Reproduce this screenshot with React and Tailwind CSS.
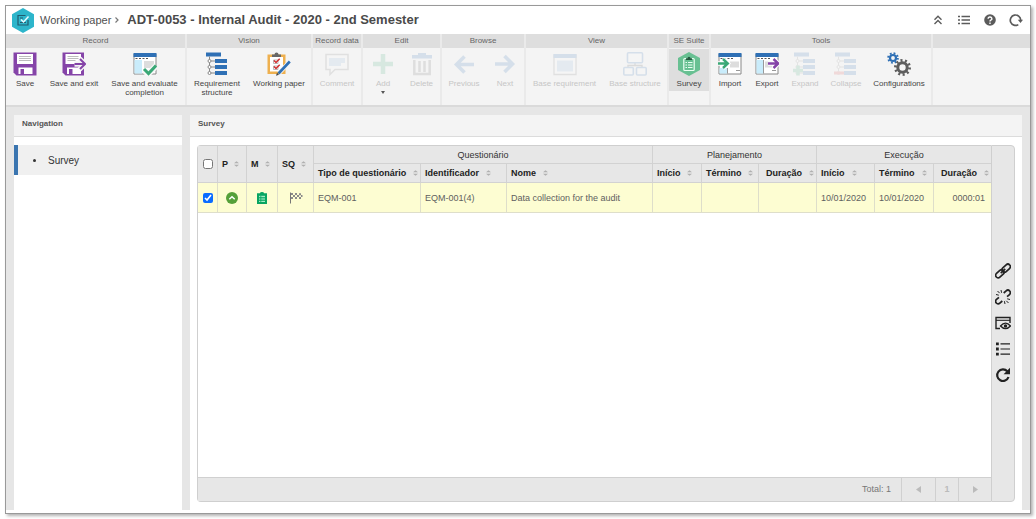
import React, { useState } from "react";

const PURPLE = "#8544a8";
const BLUE = "#2f70b5";
const GREEN = "#3aa876";
const DARK = "#5d5d5d";

/* ---------- ribbon icons ---------- */

function Ico({ children }) {
  return (
    <svg viewBox="0 0 24 24" className="h-6 w-6 shrink-0" fill="none" aria-hidden="true">
      {children}
    </svg>
  );
}

function SaveIcon() {
  return (
    <Ico>
      <path fill={PURPLE} d="M0.5 0.5h23v23H3.500l-3-3z" />
      <path fill="#fff" d="M4 2h16v10H4zM5.500 15.500h14V22h-14z" />
      <path stroke="#bdbdbd" d="M6 4.500h12M6 6.500h12M6 8.500h12" />
      <path fill={PURPLE} d="M7.500 17h3.500v5H7.500z" />
      <path stroke={PURPLE} d="M2 2v18.500l1.800 1.800" />
    </Ico>
  );
}

function SaveExitIcon() {
  return (
    <Ico>
      <path fill={PURPLE} d="M0.5 0.5H22v23H3.500l-3-3z" />
      <path fill="#fff" d="M3.500 2h15.500v10H3.500zM5 15.500h14V22H5z" />
      <path stroke="#bdbdbd" d="M5.500 4.500h11M5.500 6.500h11M5.500 8.500h8" />
      <path fill={PURPLE} d="M7 17h3.500v5H7z" />
      <path stroke="#f4f4f4" strokeWidth="5.500" d="M12.500 12H24" />
      <path stroke="#f4f4f4" strokeWidth="5" d="m17.500 6.500 5.500 5.500-5.500 5.500" />
      <path stroke={PURPLE} strokeWidth="2" d="M12.500 12H23M18 7l5 5-5 5" />
    </Ico>
  );
}

function WindowBase() {
  return (
    <>
      <path fill="#fff" stroke="#888" d="M1 2h22v20H1z" />
      <path fill={BLUE} d="M0.500 1h23v4H0.500z" />
      <path stroke="#555" strokeDasharray="2 1.500" d="M2.500 6.500h14" />
    </>
  );
}

function EvaluateIcon() {
  return (
    <Ico>
      <WindowBase />
      <path fill="#c9ecfb" d="M1.500 8H9v13.500H1.500z" />
      <path fill="#ddd" d="M11 9h10v7H11z" />
      <path stroke="#f8f8f8" strokeWidth="6" d="m11 18 4 4 8-8" />
      <path stroke={GREEN} strokeWidth="3" d="m11 17 4.500 4.500L23 13.500" />
    </Ico>
  );
}

function ImportIcon() {
  return (
    <Ico>
      <WindowBase />
      <path fill="#c9ecfb" d="M1.500 16H9v5.500H1.500z" />
      <path fill="#ddd" d="M12 9.500h9v6h-9z" />
      <path stroke="#999" d="M9.500 16v5.500M18 18.500h4" />
      <path stroke="#fff" strokeWidth="4.500" d="M0 11.500h9.500M5 7l4.800 4.500L5 16" />
      <path stroke={GREEN} strokeWidth="2.400" d="M0 11.500h9.500M5 7l4.800 4.500L5 16" />
    </Ico>
  );
}

function ExportIcon() {
  return (
    <Ico>
      <WindowBase />
      <path fill="#c9ecfb" d="M1.500 8H8v13.500H1.500z" />
      <path fill="#ddd" d="M10 9.500h7v6h-7z" />
      <path stroke="#999" d="M8.500 8v13.500M17 18.500h4" />
      <path stroke="#fff" strokeWidth="4.500" d="M13 11.500h10M18.500 7l4.800 4.500-4.800 4.500" />
      <path stroke={PURPLE} strokeWidth="2.400" d="M13 11.500h10M18.500 7l4.800 4.500-4.800 4.500" />
    </Ico>
  );
}

function Tree() {
  return (
    <>
      <path fill={BLUE} d="M1 0.500h15v4H1zM10 7h12v4H10zM10 13h12v4H10zM10 19h12v4H10z" />
      <path stroke="#888" d="M4.500 4.500V21M6 9h4M6 15h4M6 21h4" />
      <path fill="#fff" stroke="#888" d="M3 9a1.500 1.500 0 1 0 3 0a1.500 1.500 0 1 0-3 0M3 15a1.500 1.500 0 1 0 3 0a1.500 1.500 0 1 0-3 0M3 21a1.500 1.500 0 1 0 3 0a1.500 1.500 0 1 0-3 0" />
    </>
  );
}

function TreeIcon() {
  return <Ico><Tree /></Ico>;
}

function ExpandIcon() {
  return (
    <Ico>
      <Tree />
      <path stroke={GREEN} strokeWidth="3.500" d="M0 18.500h10M5 13.500v10" />
    </Ico>
  );
}

function CollapseIcon() {
  return (
    <Ico>
      <Tree />
      <path stroke="#e04848" strokeWidth="3" d="M0 21h10" />
    </Ico>
  );
}

function ClipboardIcon() {
  return (
    <Ico>
      <path fill="#eeb04f" d="M0.500 2.500h18v19.500h-18z" />
      <path fill="#fff" d="M3 5h13v14.500H3z" />
      <path fill="#666" d="M5 2.500h2.500a2 2 0 0 1 4 0H14V5H5z" />
      <path stroke="#aaa" strokeWidth="0.800" d="M6.500 8h4.500v3.500H6.500zM6.500 14h4.500v3.500H6.500z" />
      <path stroke="#d22d2d" strokeWidth="1.500" d="m7 8.500 2 2 3.700-3.700M7 14.500l2 2 3.700-3.700" />
      <path stroke="#f4f4f4" strokeWidth="4.500" d="M12 21 23 9.500" />
      <path stroke={BLUE} strokeWidth="2.600" d="M11.500 21.500 22.800 9.500" />
      <path fill="#444" d="m9 23.800 1-3 2 2z" />
    </Ico>
  );
}

function CommentIcon() {
  return (
    <Ico>
      <path fill="#fff" stroke="#777" strokeWidth="1.500" d="M1 2.500h22v15H10l-5 5v-5H1z" />
      <path fill="#8fb4dc" d="M4 6h16v5h-4v3H4z" />
    </Ico>
  );
}

function PlusIcon() {
  return <Ico><path stroke={GREEN} strokeWidth="4.500" d="M2 12h20M12 2v20" /></Ico>;
}

function TrashIcon() {
  return (
    <Ico>
      <path fill={BLUE} d="M2 3h6V1h8v2h6v3.500H2z" />
      <path stroke="#666" strokeWidth="2.500" d="M4.300 8v14h15.400V8M9.500 9v11M14.500 9v11" />
    </Ico>
  );
}

function ArrowLeftIcon() {
  return <Ico><path stroke={BLUE} strokeWidth="3.600" d="M22 12.500H5M12.500 4.500l-8 8 8 8" /></Ico>;
}

function ArrowRightIcon() {
  return <Ico><path stroke={BLUE} strokeWidth="3.600" d="M2 12h17M11.500 4l8 8-8 8" /></Ico>;
}

function BaseRequirementIcon() {
  return (
    <Ico>
      <path fill="#fff" stroke="#777" strokeWidth="1.300" d="M1 3h22v19.500H1z" />
      <path fill={BLUE} d="M0.500 2h23v4H0.500z" />
      <path fill="#8fb4dc" d="M4 8.500h16v11H4z" />
    </Ico>
  );
}

function BaseStructureIcon() {
  return (
    <Ico>
      <path stroke="#555" strokeWidth="1.400" d="M12 10v4M5 16v-2.500h14V16" />
      <g fill="#fff" stroke={BLUE} strokeWidth="1.600">
        <rect x="4.500" y="0.800" width="15" height="10" rx="1" />
        <rect x="0.800" y="15.500" width="9.500" height="7.500" rx="1" />
        <rect x="13.500" y="15.500" width="9.700" height="7.500" rx="1" />
      </g>
    </Ico>
  );
}

function SurveyIcon() {
  return (
    <Ico>
      <path fill="#68c092" d="m12 0 11 6v12l-11 6-11-6V6z" />
      <rect x="6.800" y="6.500" width="10.400" height="12" rx="1" stroke="#eafff2" strokeWidth="1.200" />
      <path fill="#24583e" d="M9 8V6.300h1.500a1.500 1.500 0 0 1 3 0H15V8z" />
      <path stroke="#eafff2" d="M8.500 10.500h1.500M11 10.500h4.500M8.500 13h1.500M11 13h4.500M8.500 15.500h1.500M11 15.500h4.500" />
    </Ico>
  );
}

function GearsIcon() {
  return (
    <Ico>
      <circle cx="6" cy="6" r="3" stroke={BLUE} strokeWidth="2.200" />
      <circle cx="6" cy="6" r="4.800" stroke={BLUE} strokeWidth="2" strokeDasharray="1.800 1.970" />
      <circle cx="15.500" cy="15.500" r="4.700" stroke={DARK} strokeWidth="3" />
      <circle cx="15.500" cy="15.500" r="7.100" stroke={DARK} strokeWidth="2.800" strokeDasharray="2 2.461" />
    </Ico>
  );
}

/* ---------- ribbon ---------- */

const GROUPS = [
  {
    title: "Record",
    items: [
      { label: "Save", icon: SaveIcon, width: "w-[38px]" },
      { label: "Save and exit", icon: SaveExitIcon, width: "w-[60px]" },
      { label: "Save and evaluate completion", icon: EvaluateIcon, width: "w-[81px]" },
    ],
  },
  {
    title: "Vision",
    items: [
      { label: "Requirement structure", icon: TreeIcon, width: "w-[60px]" },
      { label: "Working paper", icon: ClipboardIcon, width: "w-16" },
    ],
  },
  { title: "Record data", items: [{ label: "Comment", icon: CommentIcon, width: "w-12", disabled: true }] },
  {
    title: "Edit",
    items: [
      { label: "Add", icon: PlusIcon, width: "w-10", disabled: true, menu: true },
      { label: "Delete", icon: TrashIcon, width: "w-[37px]", disabled: true },
    ],
  },
  {
    title: "Browse",
    items: [
      { label: "Previous", icon: ArrowLeftIcon, width: "w-11", disabled: true },
      { label: "Next", icon: ArrowRightIcon, width: "w-[38px]", disabled: true },
    ],
  },
  {
    title: "View",
    items: [
      { label: "Base requirement", icon: BaseRequirementIcon, width: "w-[77px]", disabled: true },
      { label: "Base structure", icon: BaseStructureIcon, width: "w-16", disabled: true },
    ],
  },
  { title: "SE Suite", items: [{ label: "Survey", icon: SurveyIcon, width: "w-10", active: true }] },
  {
    title: "Tools",
    items: [
      { label: "Import", icon: ImportIcon, width: "w-[38px]" },
      { label: "Export", icon: ExportIcon, width: "w-9" },
      { label: "Expand", icon: ExpandIcon, width: "w-10", disabled: true },
      { label: "Collapse", icon: CollapseIcon, width: "w-[42px]", disabled: true },
      { label: "Configurations", icon: GearsIcon, width: "w-16" },
    ],
  },
];

function RibbonButton({ item }) {
  const Icon = item.icon;
  return (
    <button
      type="button"
      disabled={item.disabled}
      aria-pressed={item.active}
      className={`${item.width} flex h-[42px] flex-col items-center gap-[3px] whitespace-nowrap pt-[3px] text-[8px] leading-[9px] ${
        item.active ? "bg-[#dedede]" : ""
      } ${item.disabled ? "text-[#c6c6c6]" : "text-[#444]"}`}
    >
      <span className={item.disabled ? "opacity-15" : ""}>
        <Icon />
      </span>
      <span className={item.label.length > 18 ? "whitespace-normal" : ""}>{item.label}</span>
      {item.menu && (
        <svg viewBox="0 0 4 3" className="h-[3px] w-1 shrink-0" aria-hidden="true">
          <path fill="#555" d="M0 0h4L2 3z" />
        </svg>
      )}
    </button>
  );
}

function Ribbon() {
  return (
    <div className="flex h-[73px] border-b-2 border-[#dadada] bg-[#f4f4f4]">
      {GROUPS.map((group) => (
        <section key={group.title} className="flex flex-col border-r-2 border-[#eaeaea]">
          <h2 className="flex h-3.5 items-center justify-center whitespace-nowrap bg-[#dedede] text-[8px] text-[#666]">
            {group.title}
          </h2>
          <div className="flex pt-px">
            {group.items.map((item) => (
              <RibbonButton key={item.label} item={item} />
            ))}
          </div>
        </section>
      ))}
      <div className="flex-1">
        <div className="h-3.5 bg-[#dedede]" />
      </div>
    </div>
  );
}

/* ---------- header ---------- */

function HeaderButton({ label, children }) {
  return (
    <button type="button" aria-label={label} className="flex h-3.5 w-3.5 items-center justify-center text-[#5b5b5b]">
      <svg viewBox="0 0 14 14" className="h-3.5 w-3.5" fill="none" stroke="currentColor" aria-hidden="true">
        {children}
      </svg>
    </button>
  );
}

function Header() {
  return (
    <header className="flex h-7 items-center bg-white pl-1.5 pr-[7px]">
      <svg viewBox="0 0 22 25" className="h-[25px] w-[22px]" fill="none" aria-hidden="true">
        <path fill="#2db5cb" d="m11 0 11 6.200v12.600L11 25 0 18.800V6.200z" />
        <path stroke="#205c70" strokeWidth="1.200" d="M13.500 7.500H6v9.500h10v-5" />
        <path stroke="#205c70" d="M8 10h3M8 14.500h6" />
        <path stroke="#e9fbff" strokeWidth="1.500" d="m9 11.500 2.500 2.500 5-5.500" />
      </svg>
      <a href="#working-paper" className="ml-1.5 whitespace-nowrap text-[11px] text-[#505050]">
        Working paper
      </a>
      <svg viewBox="0 0 4 6" className="ml-1 mr-2 h-1.5 w-1" fill="none" aria-hidden="true">
        <path stroke="#777" strokeWidth="1.200" d="m0.500 0.500 2.500 2.500L0.500 5.500" />
      </svg>
      <h1 className="whitespace-nowrap text-[13px] font-bold text-[#4a4a4a]">ADT-0053 - Internal Audit - 2020 - 2nd Semester</h1>
      <div className="ml-auto flex gap-3">
        <HeaderButton label="Collapse toolbar">
          <path strokeWidth="1.400" d="M3.500 6.800 7 3.300l3.500 3.500M3.500 11 7 7.500l3.500 3.500" />
        </HeaderButton>
        <HeaderButton label="List">
          <path strokeWidth="1.500" d="M1 3.500h2M1 7h2M1 10.500h2M4.500 3.500H13M4.500 7H13M4.500 10.500H13" />
        </HeaderButton>
        <HeaderButton label="Help">
          <circle cx="7" cy="7" r="5.800" fill="currentColor" stroke="none" />
          <path stroke="#fff" strokeWidth="1.400" d="M5.100 5.700a1.900 1.700 0 1 1 2.700 1.500q-.8.400-.8 1.200M7 9.500v1.400" />
        </HeaderButton>
        <HeaderButton label="Refresh">
          <path strokeWidth="1.700" d="M9.300 11.600A5.200 5.200 0 1 1 11.700 7" />
          <path fill="currentColor" stroke="none" d="M8.800 6.800H14L11.500 10z" />
        </HeaderButton>
      </div>
    </header>
  );
}

/* ---------- survey table ---------- */

function Sort() {
  return (
    <svg viewBox="0 0 5 6" className="h-1.5 w-[5px] shrink-0" aria-hidden="true">
      <path fill="#b0b0b0" d="M0 2.200 2.500 0.200 5 2.200zM0 3.800h5L2.500 5.800z" />
    </svg>
  );
}

function Th({ children, right, tall }) {
  return (
    <th rowSpan={tall ? 2 : 1} className="h-[19px] border-b border-r border-[#d2d2d2] p-0 pl-1 font-bold text-[#222] last:border-r-0">
      <button
        type="button"
        className={`flex w-full items-center whitespace-nowrap font-bold ${right ? "justify-end gap-[7px] pr-0.5" : tall ? "gap-1.5" : "gap-[7px]"}`}
      >
        {children}
        <Sort />
      </button>
    </th>
  );
}

function GroupTh({ children, span }) {
  return (
    <th colSpan={span} className="h-[18px] border-b border-r border-[#d2d2d2] p-0 text-center font-normal text-[#333] last:border-r-0">
      {children}
    </th>
  );
}

function Td({ children, className = "pl-1" }) {
  return <td className={`h-[30px] border-b border-r border-[#dedeca] p-0 last:border-r-0 ${className}`}>{children}</td>;
}

function SurveyTable() {
  const [checked, setChecked] = useState(true);
  return (
    <table className="w-full table-fixed border-separate border-spacing-0 text-left text-[9px] leading-3 text-[#606060]">
      <colgroup>
        <col className="w-5" />
        <col className="w-[29px]" />
        <col className="w-[31px]" />
        <col className="w-9" />
        <col className="w-[107px]" />
        <col className="w-[86px]" />
        <col />
        <col className="w-[49px]" />
        <col className="w-[57px]" />
        <col className="w-[58px]" />
        <col className="w-[58px]" />
        <col className="w-[59px]" />
        <col className="w-[57px]" />
      </colgroup>
      <thead className="bg-[#e7e7e7]">
        <tr>
          <th rowSpan={2} className="border-b border-r border-[#d2d2d2] p-0">
            <input type="checkbox" aria-label="Select all" className="mx-auto block h-2.5 w-2.5" />
          </th>
          <Th tall>P</Th>
          <Th tall>M</Th>
          <Th tall>SQ</Th>
          <GroupTh span={3}>Questionário</GroupTh>
          <GroupTh span={3}>Planejamento</GroupTh>
          <GroupTh span={3}>Execução</GroupTh>
        </tr>
        <tr>
          <Th>Tipo de questionário</Th>
          <Th>Identificador</Th>
          <Th>Nome</Th>
          <Th>Início</Th>
          <Th>Término</Th>
          <Th right>Duração</Th>
          <Th>Início</Th>
          <Th>Término</Th>
          <Th right>Duração</Th>
        </tr>
      </thead>
      <tbody className="bg-[#fdfdd2]">
        <tr>
          <Td className="">
            <input
              type="checkbox"
              aria-label="Select EQM-001"
              checked={checked}
              onChange={(e) => setChecked(e.target.checked)}
              className="mx-auto block h-2.5 w-2.5 accent-[#0a6cff]"
            />
          </Td>
          <Td className="">
            <svg viewBox="0 0 12 12" className="mx-auto h-3 w-3" fill="none" aria-hidden="true">
              <circle cx="6" cy="6" r="6" fill="#55a03a" />
              <path stroke="#fff" strokeWidth="1.500" d="m3.300 7.300 2.700-2.600 2.700 2.600" />
            </svg>
          </Td>
          <Td className="">
            <svg viewBox="0 0 10 12" className="mx-auto h-3 w-2.5" fill="none" aria-hidden="true">
              <path fill="#08a562" d="M0 1.200h3a2 1.200 0 0 1 4 0h3V12H0z" />
              <path fill="#a3ecc4" d="M2 3.800h6V10H2z" />
              <path stroke="#08a562" strokeWidth="0.800" d="M2 5.500h6M2 7h6M2 8.500h6M3.800 3.800V10" />
            </svg>
          </Td>
          <Td className="">
            <svg viewBox="0 0 14 12" className="mx-auto h-3 w-3.5" fill="none" aria-hidden="true">
              <path stroke="#777" d="M1.500 0.500v11" />
              <path fill="#8a8a8a" d="M2 1h2v2H2zM6 1h2v2H6zM10 1.200h2v2h-2zM4 3h2v2H4zM8 3h2v2H8zM12 3h1.500v2H12zM2 5h2v2H2zM6 5h2v2H6zM10 5h2v2h-2z" />
            </svg>
          </Td>
          <Td>EQM-001</Td>
          <Td>EQM-001(4)</Td>
          <Td>Data collection for the audit</Td>
          <Td />
          <Td />
          <Td />
          <Td>10/01/2020</Td>
          <Td>10/01/2020</Td>
          <Td className="pr-1.5 text-right">0000:01</Td>
        </tr>
      </tbody>
    </table>
  );
}

function Pager() {
  return (
    <div className="flex h-6 items-stretch justify-end border-t border-[#d0d0d0] bg-[#e7e7e7] text-[9px] text-[#777]">
      <span className="flex items-center pr-2.5">Total: 1</span>
      <button type="button" aria-label="Previous page" className="flex w-[34px] items-center justify-center border-l border-[#d0d0d0]">
        <svg viewBox="0 0 5 7" className="h-[7px] w-[5px]"><path fill="#bbb" d="M5 0v7L0 3.500z" /></svg>
      </button>
      <button type="button" className="w-[23px] border-l border-[#d0d0d0] font-bold text-[#bbb]">1</button>
      <button type="button" aria-label="Next page" className="flex w-[33px] items-center justify-center border-l border-[#d0d0d0]">
        <svg viewBox="0 0 5 7" className="h-[7px] w-[5px]"><path fill="#bbb" d="M0 0v7l5-3.500z" /></svg>
      </button>
    </div>
  );
}

function SideButton({ label, children }) {
  return (
    <button type="button" aria-label={label} className="h-4 w-4 text-[#222]">
      <svg viewBox="0 0 16 16" className="h-4 w-4" fill="none" stroke="currentColor" strokeWidth="1.700" aria-hidden="true">
        {children}
      </svg>
    </button>
  );
}

function SideBar() {
  return (
    <div className="flex w-6 flex-col items-center justify-center gap-2.5 rounded-r-sm border border-[#cfcfcf] bg-[#e7e7e7] pb-0.5">
      <SideButton label="Link">
        <g transform="rotate(-42 8 8)">
          <rect x="-1" y="5.500" width="9.500" height="5" rx="2.500" />
          <rect x="7.500" y="5.500" width="9.500" height="5" rx="2.500" />
          <path d="M5 8h6" />
        </g>
      </SideButton>
      <SideButton label="Unlink">
        <g transform="rotate(-42 8 8)">
          <path d="M4.800 5.500H1.500a2.500 2.500 0 0 0 0 5h3.300M11.200 5.500h3.300a2.500 2.500 0 0 1 0 5h-3.300" />
        </g>
        <path strokeWidth="1" d="M6 1l.6 2.800M1 5.500l2.800.7M2.500 2l2.200 2.200M10 15l-.6-2.800M15 10.500l-2.800-.7M13.500 14l-2.200-2.200" />
      </SideButton>
      <SideButton label="Preview">
        <path strokeWidth="1.400" d="M5 13.500H1v-11h14V8" />
        <path strokeWidth="1.100" d="M1 5.300h14" />
        <path strokeWidth="1.300" d="M5.500 11q5-5.800 10 0q-5 5.400-10 0z" />
        <circle cx="10.500" cy="11" r="1.700" fill="currentColor" stroke="none" />
      </SideButton>
      <SideButton label="Details">
        <path strokeWidth="2.800" d="M1 2.800h2.800M1 8h2.800M1 13.200h2.800" />
        <path strokeWidth="1.200" d="M5.500 2.800H15M5.500 8H15M5.500 13.200H15" />
      </SideButton>
      <SideButton label="Reload">
        <path strokeWidth="2.200" d="M12.300 4.300A5.800 5.800 0 1 0 13.500 10" />
        <path fill="currentColor" stroke="none" d="M15 0.800v6.400H8.600z" />
      </SideButton>
    </div>
  );
}

/* ---------- page ---------- */

function PanelTitle({ children }) {
  return (
    <h2 className="flex h-[22px] items-center border-b border-[#dcdcdc] bg-[#f4f4f4] px-2 pb-1 text-[8px] font-bold text-[#555]">
      {children}
    </h2>
  );
}

export default function App() {
  return (
    <div className="flex min-h-screen flex-col bg-white p-[5px] font-['Liberation_Sans',Arial,sans-serif]">
      <div className="flex flex-1 flex-col border border-[#999] bg-white pb-[3px] shadow-[2px_2px_3px_rgba(0,0,0,0.3)]">
        <Header />
        <Ribbon />
        <main className="flex flex-1 gap-2 bg-[#e6e6e6] px-2 pt-2">
          <nav className="w-[168px] shrink-0 bg-white">
            <PanelTitle>Navigation</PanelTitle>
            <a
              href="#survey"
              className="mt-2 flex h-[30px] items-center border-l-4 border-[#3a75b0] bg-[#f0f0f0] pl-[15px] text-[10px] text-[#333]"
            >
              <span className="mr-3 h-[3px] w-[3px] rounded-full bg-[#333]" />
              Survey
            </a>
          </nav>
          <section className="flex min-w-0 flex-1 flex-col bg-white">
            <PanelTitle>Survey</PanelTitle>
            <div className="flex flex-1 px-[7px] pb-2 pt-2">
              <div className="flex min-w-0 flex-1 flex-col justify-between rounded-l-sm border border-r-0 border-[#cfcfcf]">
                <SurveyTable />
                <Pager />
              </div>
              <SideBar />
            </div>
          </section>
        </main>
      </div>
    </div>
  );
}
